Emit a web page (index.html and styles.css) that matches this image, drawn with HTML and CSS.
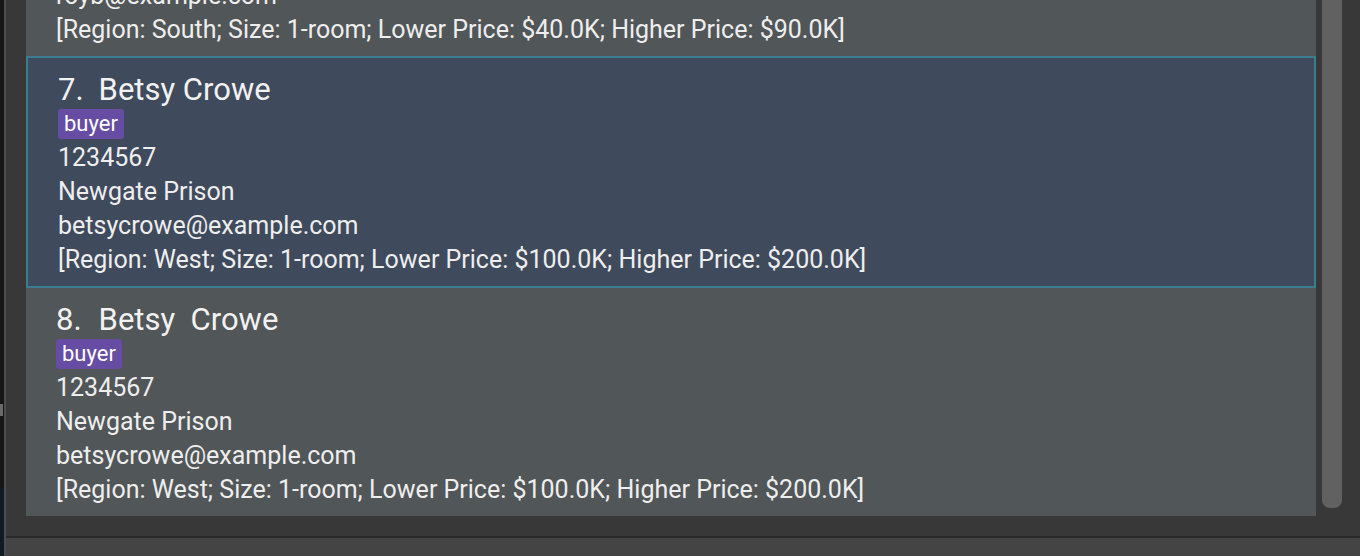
FILE: index.html
```html
<!DOCTYPE html>
<html>
<head>
<meta charset="utf-8">
<link rel="stylesheet" href="styles.css">
</head>
<body>
<div class="window">
  <div class="edge"><span class="edge-mark"></span></div>
  <div class="main">
    <div class="list-wrap">
      <div class="list">
        <div class="cell">
          <div class="name-row"><span class="id">6.</span><span class="name">Roy Balakrishnan</span></div>
          <div class="tags"><span class="tag">buyer</span></div>
          <div class="line">92624417</div>
          <div class="line">Blk 45 Aljunied Street 85, #11-31</div>
          <div class="line">royb@example.com</div>
          <div class="line">[Region: South; Size: 1-room; Lower Price: $40.0K; Higher Price: $90.0K]</div>
        </div>
        <div class="cell selected">
          <div class="name-row"><span class="id">7.</span><span class="name">Betsy Crowe</span></div>
          <div class="tags"><span class="tag">buyer</span></div>
          <div class="line">1234567</div>
          <div class="line">Newgate Prison</div>
          <div class="line">betsycrowe@example.com</div>
          <div class="line">[Region: West; Size: 1-room; Lower Price: $100.0K; Higher Price: $200.0K]</div>
        </div>
        <div class="cell">
          <div class="name-row wide"><span class="id">8.</span><span class="name">Betsy  Crowe</span></div>
          <div class="tags"><span class="tag">buyer</span></div>
          <div class="line">1234567</div>
          <div class="line">Newgate Prison</div>
          <div class="line">betsycrowe@example.com</div>
          <div class="line">[Region: West; Size: 1-room; Lower Price: $100.0K; Higher Price: $200.0K]</div>
        </div>
      </div>
      <div class="scrollbar"><div class="thumb"></div></div>
    </div>
    <div class="status"></div>
  </div>
</div>
</body>
</html>
```
FILE: styles.css
```css
html, body {
  margin: 0;
  padding: 0;
  height: 556px;
  overflow: hidden;
  background: #383838;
}

.window {
  display: flex;
  height: 556px;
  font-family: Roboto, "Liberation Sans", sans-serif;
  color: #eeeeee;
}

.edge {
  width: 4px;
  flex: none;
  background: linear-gradient(#161616 0, #161616 488px, #0f1a24 488px);
  border-right: 2px solid #4d4d4d;
  display: flex;
  flex-direction: column;
  padding-top: 404px;
}

.edge-mark {
  display: block;
  width: 3px;
  height: 12px;
  background: #6a6a6a;
}

.main {
  flex: 1;
  display: flex;
  flex-direction: column;
  background: #383838;
}

.list-wrap {
  height: 536px;
  display: flex;
  align-items: flex-start;
  overflow: hidden;
  padding-left: 20px;
}

.list {
  width: 1290px;
  flex: none;
  margin-top: -172px;
  display: flex;
  flex-direction: column;
}

.cell {
  background: #515658;
  height: 228px;
  padding: 15px 0 0 30px;
  box-sizing: border-box;
}

.cell.selected {
  background: #3f4a5c;
  border: 2px solid #3a7d90;
  height: 232px;
}

.name-row {
  height: 34px;
  line-height: 34px;
  font-size: 31px;
  display: flex;
  gap: 15px;
  white-space: pre;
  color: #f2f2f2;
}

.name-row.wide {
  gap: 17px;
}

.tags {
  display: flex;
  margin-top: 2px;
  margin-bottom: 2px;
}

.tag {
  background: #674ca3;
  color: #ffffff;
  font-size: 22px;
  height: 30px;
  line-height: 30px;
  padding: 0 6px;
  border-radius: 3px;
}

.line {
  height: 34px;
  line-height: 34px;
  font-size: 25px;
  white-space: nowrap;
}

.scrollbar {
  margin-left: 6px;
  width: 20px;
  flex: none;
}

.thumb {
  height: 508px;
  background: #616161;
  border-radius: 0 0 8px 8px;
}

.status {
  flex: 1;
  border-top: 2px solid #2a2a2a;
  background: #444444;
}
```
